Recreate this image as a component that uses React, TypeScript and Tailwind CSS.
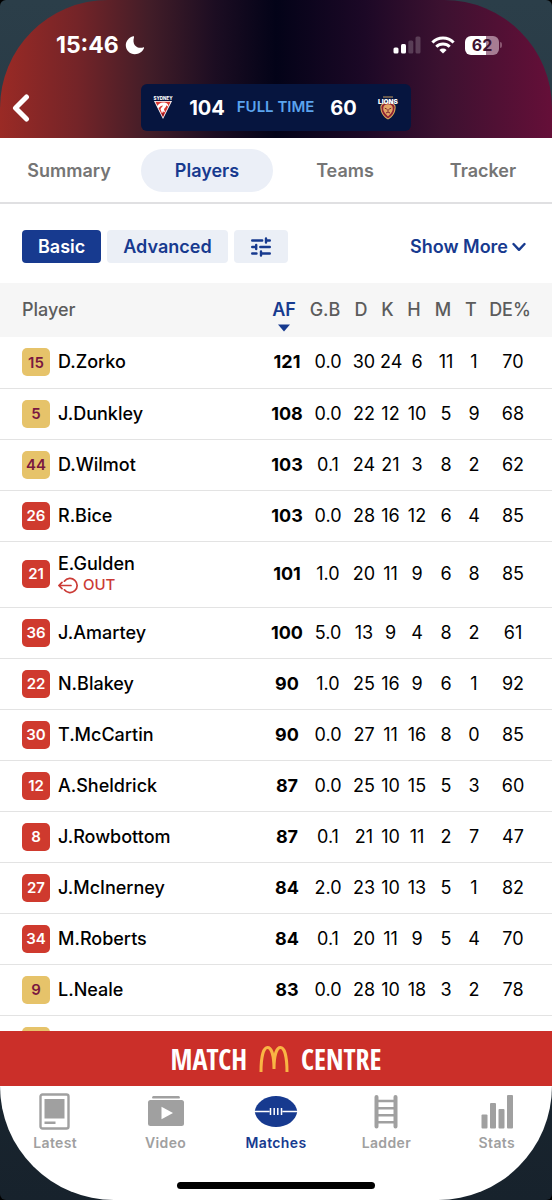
import React, { useState } from "react";
import clsx from "clsx";

type Team = "SYD" | "BRI";

interface PlayerRow {
  number: number;
  name: string;
  team: Team;
  out?: boolean;
  stats: string[];
}

const columns = [
  { key: "AF", width: "w-[42px]" },
  { key: "G.B", width: "w-10" },
  { key: "D", width: "w-8" },
  { key: "K", width: "w-[21px]" },
  { key: "H", width: "w-8" },
  { key: "M", width: "w-[26px]" },
  { key: "T", width: "w-[30px]" },
  { key: "DE%", width: "w-12" },
];

const players: PlayerRow[] = [
  { number: 15, name: "D.Zorko", team: "BRI", stats: ["121", "0.0", "30", "24", "6", "11", "1", "70"] },
  { number: 5, name: "J.Dunkley", team: "BRI", stats: ["108", "0.0", "22", "12", "10", "5", "9", "68"] },
  { number: 44, name: "D.Wilmot", team: "BRI", stats: ["103", "0.1", "24", "21", "3", "8", "2", "62"] },
  { number: 26, name: "R.Bice", team: "SYD", stats: ["103", "0.0", "28", "16", "12", "6", "4", "85"] },
  { number: 21, name: "E.Gulden", team: "SYD", out: true, stats: ["101", "1.0", "20", "11", "9", "6", "8", "85"] },
  { number: 36, name: "J.Amartey", team: "SYD", stats: ["100", "5.0", "13", "9", "4", "8", "2", "61"] },
  { number: 22, name: "N.Blakey", team: "SYD", stats: ["90", "1.0", "25", "16", "9", "6", "1", "92"] },
  { number: 30, name: "T.McCartin", team: "SYD", stats: ["90", "0.0", "27", "11", "16", "8", "0", "85"] },
  { number: 12, name: "A.Sheldrick", team: "SYD", stats: ["87", "0.0", "25", "10", "15", "5", "3", "60"] },
  { number: 8, name: "J.Rowbottom", team: "SYD", stats: ["87", "0.1", "21", "10", "11", "2", "7", "47"] },
  { number: 27, name: "J.McInerney", team: "SYD", stats: ["84", "2.0", "23", "10", "13", "5", "1", "82"] },
  { number: 34, name: "M.Roberts", team: "SYD", stats: ["84", "0.1", "20", "11", "9", "5", "4", "70"] },
  { number: 9, name: "L.Neale", team: "BRI", stats: ["83", "0.0", "28", "10", "18", "3", "2", "78"] },
];

const SwansLogo = () => (
  <svg width="20" height="24" viewBox="0 0 20 24" aria-hidden="true">
    <text x="10" y="4" textAnchor="middle" fontSize="4.5" fontWeight="800" fill="#fff" fontFamily="Inter, sans-serif">
      SYDNEY
    </text>
    <path d="M1 5h18l-9 18z" fill="#fff" />
    <path d="M2.4 5.8h15.2L10 21.3z" fill="#d8352f" />
    <path d="M4 10.5c1-2.8 4-4.6 7.5-4 2.8.4 4.2 2.1 3.9 4.4l-2-1.6c-.4 2.2-2.2 2.8-2.4 4.4l1.2 2.2-2.4-.4-.7 2-1.6-4.3c.5-1.8 2-2.6 2.7-3.8-2 .1-3.3.9-4.4 2.9z" fill="#fff" />
    <path d="M8.4 17.2l1.6 3.4 1.4-3z" fill="#8c1620" />
  </svg>
);

const LionsLogo = () => (
  <svg width="22" height="24" viewBox="0 0 22 24" aria-hidden="true">
    <path d="M6 1h10" stroke="#a8865c" strokeWidth="1.2" />
    <path d="M3.4 11c0-3 3.6-4.4 7.6-4.4s7.6 1.4 7.6 4.4c0 5.600-2.600 9.800-7.600 12.600C6 20.800 3.400 16.600 3.400 11z" fill="#e0b15c" />
    <path d="M4.400 11.200c0-2.600 3-3.900 6.600-3.900s6.600 1.300 6.600 3.900c0 4.800-2.200 8.600-6.600 11.200-4.400-2.600-6.600-6.400-6.600-11.200z" fill="#8e2034" />
    <path d="M6.300 11.600c.4-2.400 2.300-3.400 4.700-3.400s4.300 1 4.700 3.400c.4 2.800-.7 4.600-1.900 6L11 20.600l-2.800-3c-1.200-1.400-2.300-3.200-1.900-6z" fill="#e3a565" />
    <path d="M7.800 12.200l2 .9M14.200 12.200l-2 .9M9 17l2-1 2 1M11 13v2.600" stroke="#7a2130" strokeWidth="1" fill="none" />
    <text x="11" y="7.500" textAnchor="middle" fontSize="6.500" fontWeight="900" fill="#fff" fontFamily="Inter, sans-serif">
      LIONS
    </text>
  </svg>
);

const SignalIcon = () => (
  <svg width="28" height="18" viewBox="0 0 28 18" aria-hidden="true">
    <rect x="0.500" y="11.500" width="5" height="6" rx="1.500" fill="#fff" />
    <rect x="8" y="8" width="5" height="9.500" rx="1.500" fill="#fff" />
    <rect x="15.300" y="4.500" width="5" height="13" rx="1.500" fill="#fff" opacity="0.200" />
    <rect x="22.500" y="0.500" width="5" height="17" rx="1.500" fill="#fff" opacity="0.200" />
  </svg>
);

const WifiIcon = () => (
  <svg width="24" height="18" viewBox="0 0 24 18" fill="none" stroke="#fff" strokeWidth="3" aria-hidden="true">
    <path d="M1.400 6.500a15 15 0 0 1 21.200 0" />
    <path d="M5.300 10.700a9.500 9.500 0 0 1 13.400 0" />
    <path d="M12 17.500l-3.600-3.600a5.100 5.100 0 0 1 7.200 0z" fill="#fff" stroke="none" />
  </svg>
);

const StatusBar = () => (
  <div className="flex items-center justify-between pl-14 pr-[50px] pt-[33px] text-white">
    <div className="flex items-center gap-1.5">
      <span className="text-[23px] leading-6 font-bold">15:46</span>
      <svg width="20" height="20" viewBox="0 0 20 20" aria-hidden="true">
        <path d="M8.200 1.200C3.800 2.400.8 6 .8 10.300c0 5 4 8.900 9 8.900 4.200 0 7.600-2.200 9.200-5.900.3-.7-.3-1.100-.9-.9C13 14.200 6.600 10.600 9 2.200c.2-.8-.2-1.200-.8-1z" fill="#fff" />
      </svg>
    </div>
    <div className="flex items-center gap-2.5">
      <SignalIcon />
      <WifiIcon />
      <div className="flex items-center gap-px">
        <div className="flex h-[19px] w-[34px] items-center justify-center rounded-md bg-linear-to-r from-white from-62% to-[#a67d93] to-62% text-base leading-none font-bold text-[#3d1230]">
          62
        </div>
        <div className="h-1.5 w-0.5 rounded-r-full bg-[#8a5570]" />
      </div>
    </div>
  </div>
);

const MatchHeader = () => (
  <header className="rounded-t-[108px] bg-[linear-gradient(to_right,#9a2a25_0%,#742428_14%,#421d28_27%,#1c0d22_39%,#030318_50%,#1c0826_66%,#3c1130_80%,#650f38_100%)]">
    <StatusBar />
    <div className="relative flex justify-center pt-[27px] pb-[7px]">
      <button type="button" aria-label="Back" className="absolute top-9 left-3">
        <svg width="19" height="30" viewBox="0 0 19 30" fill="none" stroke="#fff" strokeWidth="5" strokeLinecap="round" strokeLinejoin="round">
          <path d="M14.500 4L3.500 15l11 11" />
        </svg>
      </button>
      <div className="flex h-[47px] items-center rounded-md bg-[#06153f] px-3">
        <SwansLogo />
        <span className="ml-4 text-xl font-bold text-white">104</span>
        <span className="ml-3 text-[15px] font-semibold text-[#5ba3ee]">FULL TIME</span>
        <span className="mr-5 ml-4 text-xl font-bold text-white">60</span>
        <LionsLogo />
      </div>
    </div>
  </header>
);

const tabs = ["Summary", "Players", "Teams", "Tracker"];

const Tabs = () => {
  const [active, setActive] = useState("Players");
  return (
    <nav className="grid grid-cols-4 border-b-2 border-[#e0e0e2] bg-white pt-[11px] pb-[10px]">
      {tabs.map((tab) => (
        <button
          key={tab}
          type="button"
          onClick={() => setActive(tab)}
          className={clsx(
            "mx-[3px] h-[43px] rounded-full text-lg font-semibold",
            tab === active ? "bg-[#ebeff7] text-[#173a8f]" : "text-[#757575]",
          )}
        >
          {tab}
        </button>
      ))}
    </nav>
  );
};

const Toolbar = () => {
  const [mode, setMode] = useState("Basic");
  return (
    <div className="flex items-center justify-between px-[22px] pt-[26px] pb-5">
      <div className="flex gap-1.5 text-lg font-semibold">
        {["Basic", "Advanced"].map((item) => (
          <button
            key={item}
            type="button"
            onClick={() => setMode(item)}
            className={clsx(
              "h-[33px] rounded px-4",
              item === mode ? "bg-[#173a8f] text-white" : "bg-[#ebeff6] text-[#173a8f]",
            )}
          >
            {item}
          </button>
        ))}
        <button type="button" aria-label="Filters" className="flex h-[33px] w-[54px] items-center justify-center rounded bg-[#ebeff6]">
          <svg width="20" height="20" viewBox="0 0 20 20" fill="none" stroke="#173a8f" strokeWidth="2.400" strokeLinecap="round">
            <path d="M1.200 3.500h10M15 1.500v4M15 3.500h3.800" />
            <path d="M1.200 10h3M5.200 8v4M9.300 10h9.500" />
            <path d="M1.200 16.500h4.300M10 14.500v4M10 16.500h8.800" />
          </svg>
        </button>
      </div>
      <button type="button" className="flex items-center gap-1 pr-1 text-lg font-semibold text-[#173a8f]">
        Show More
        <svg width="14" height="10" viewBox="0 0 14 10" fill="none" stroke="currentColor" strokeWidth="2.400" strokeLinecap="round" strokeLinejoin="round">
          <path d="M1.500 2L7 7.800 12.500 2" />
        </svg>
      </button>
    </div>
  );
};

const OutLabel = () => (
  <span className="flex items-center gap-1 text-[15px] leading-5 font-medium text-[#cb3a35]">
    <svg width="21" height="17" viewBox="0 0 21 17" fill="none" stroke="currentColor" strokeWidth="1.700" strokeLinecap="round" strokeLinejoin="round" aria-hidden="true">
      <path d="M6.400 4.200a7.100 7.100 0 1 1 0 8.600" />
      <path d="M13 8.500H1M4 5.300L.9 8.500 4 11.700" />
    </svg>
    OUT
  </span>
);

const NumberBadge = ({ number, team }: { number?: number; team: Team }) => (
  <span
    className={clsx(
      "flex size-7 shrink-0 items-center justify-center rounded-[5px] text-[15px] font-semibold",
      team === "BRI" ? "bg-[#e6c36a] text-[#7a1840]" : "bg-[#cf3a2e] text-white",
    )}
  >
    {number}
  </span>
);

const PlayerTable = () => (
  <table className="w-full table-fixed border-collapse text-lg text-black">
    <thead>
      <tr className="h-[54px] bg-[#f6f6f6] text-[#5c5c5c]">
        <th scope="col" className="pl-[22px] text-left font-medium">
          Player
        </th>
        {columns.map((col, index) => (
          <th key={col.key} scope="col" className={clsx(col.width, "p-0 pr-1.5 whitespace-nowrap")}>
            {index === 0 ? (
              <span className="relative font-semibold text-[#173a8f]">
                {col.key}
                <svg className="absolute top-full left-1/2 mt-1 -translate-x-1/2" width="12" height="8" viewBox="0 0 12 8" fill="currentColor" aria-hidden="true">
                  <path d="M0 .500h12L6 7.500z" />
                </svg>
              </span>
            ) : (
              <span className="flex justify-center font-medium">{col.key}</span>
            )}
          </th>
        ))}
        <th className="w-[15px]" aria-hidden="true" />
      </tr>
    </thead>
    <tbody>
      {players.map((player) => (
        <tr key={player.name} className={clsx("border-b border-[#e3e3e3]", player.out ? "h-[66px]" : "h-[51px]")}>
          <td className="pl-[22px]">
            <div className="flex items-center gap-2">
              <NumberBadge number={player.number} team={player.team} />
              <div>
                <div className="leading-[22px] font-medium">{player.name}</div>
                {player.out && <OutLabel />}
              </div>
            </div>
          </td>
          {player.stats.map((value, index) => (
            <td key={columns[index].key} className={clsx("p-0 text-center", index === 0 && "font-bold")}>
              {value}
            </td>
          ))}
          <td />
        </tr>
      ))}
      <tr className="h-[51px]">
        <td className="pl-[22px]">
          <NumberBadge team="BRI" />
        </td>
        <td colSpan={9} />
      </tr>
    </tbody>
  </table>
);

const MatchCentreBanner = () => (
  <a
    href="#match-centre"
    className="flex h-[55px] shrink-0 items-center justify-center gap-3 bg-[#cb2f29] font-['Open_Sans_Condensed','Roboto_Condensed',sans-serif] text-[28px] font-extrabold text-white"
  >
    MATCH
    <svg width="30" height="28" viewBox="0 0 30 28" fill="none" stroke="#f9b544" strokeWidth="3" aria-label="McDonald's">
      <path d="M2 27C2 12 4.500 2.500 8.500 2.500S15 11 15 24C15 11 17.500 2.500 21.500 2.500S28 12 28 27" />
    </svg>
    CENTRE
  </a>
);

const navItems = [
  {
    label: "Latest",
    icon: (
      <svg width="32" height="38" viewBox="0 0 32 38" aria-hidden="true">
        <rect x="1.500" y="1.500" width="28" height="34" rx="2" fill="none" stroke="currentColor" strokeWidth="2.400" />
        <rect x="5.500" y="6" width="20" height="19.500" fill="currentColor" />
        <rect x="5.500" y="28.500" width="11" height="2.500" fill="currentColor" />
      </svg>
    ),
  },
  {
    label: "Video",
    icon: (
      <svg width="38" height="38" viewBox="0 0 38 38" aria-hidden="true">
        <path d="M7 3h24a1.500 1.500 0 0 1 1.500 2.500h-27A1.500 1.500 0 0 1 7 3z" fill="currentColor" />
        <rect x="1" y="7" width="36" height="26" rx="2.500" fill="currentColor" />
        <path d="M14.500 13.800v12.400L26 20z" fill="#fff" />
      </svg>
    ),
  },
  {
    label: "Matches",
    icon: (
      <svg width="44" height="38" viewBox="0 0 44 38" aria-hidden="true">
        <path d="M.7 18.500C2 9.500 11 3 22 3s20 6.500 21.300 15.500C42 27.500 33 34 22 34S2 27.500.7 18.500z" fill="currentColor" />
        <path d="M0 18.500h15.500M28.500 18.500H44M16.500 15v7M20.200 15v7M23.800 15v7M27.500 15v7" stroke="#fff" strokeWidth="1.500" />
      </svg>
    ),
  },
  {
    label: "Ladder",
    icon: (
      <svg width="24" height="38" viewBox="0 0 24 38" fill="none" stroke="currentColor" aria-hidden="true">
        <path d="M2.500 4v29.500M21.500 4v29.500" strokeWidth="4" strokeLinecap="round" />
        <path d="M3 8h18M3 15.300h18M3 22.200h18M3 29.200h18" strokeWidth="2.600" />
      </svg>
    ),
  },
  {
    label: "Stats",
    icon: (
      <svg width="32" height="38" viewBox="0 0 32 38" fill="currentColor" aria-hidden="true">
        <rect x="0.500" y="21.500" width="6" height="14" rx="1" />
        <rect x="9" y="10" width="6" height="25.500" rx="1" />
        <rect x="17.500" y="16" width="6" height="19.500" rx="1" />
        <rect x="26" y="2" width="6" height="33.500" rx="1" />
      </svg>
    ),
  },
];

const BottomNav = () => (
  <nav className="flex h-[114px] shrink-0 flex-col justify-between rounded-b-[114px] bg-white pt-[7px] pb-[11px]">
    <div className="grid grid-cols-5">
      {navItems.map((item) => (
        <a
          key={item.label}
          href={`#${item.label.toLowerCase()}`}
          className={clsx(
            "flex flex-col items-center gap-0.5 text-sm leading-5 font-semibold tracking-wide",
            item.label === "Matches" ? "text-[#173a8f]" : "text-[#a0a0a0]",
          )}
        >
          {item.icon}
          {item.label}
        </a>
      ))}
    </div>
    <div className="mx-auto h-[7px] w-[198px] rounded-full bg-black" />
  </nav>
);

const App: React.FC = () => {
  return (
    <div className="bg-black font-[Inter,sans-serif]">
      <div className="flex h-screen flex-col rounded-md bg-linear-to-b from-[#2b3e49] to-[#17222c]">
        <MatchHeader />
        <Tabs />
        <main className="min-h-0 flex-1 overflow-y-auto bg-white [scrollbar-width:none]">
          <Toolbar />
          <PlayerTable />
        </main>
        <MatchCentreBanner />
        <BottomNav />
      </div>
    </div>
  );
};

export default App;
